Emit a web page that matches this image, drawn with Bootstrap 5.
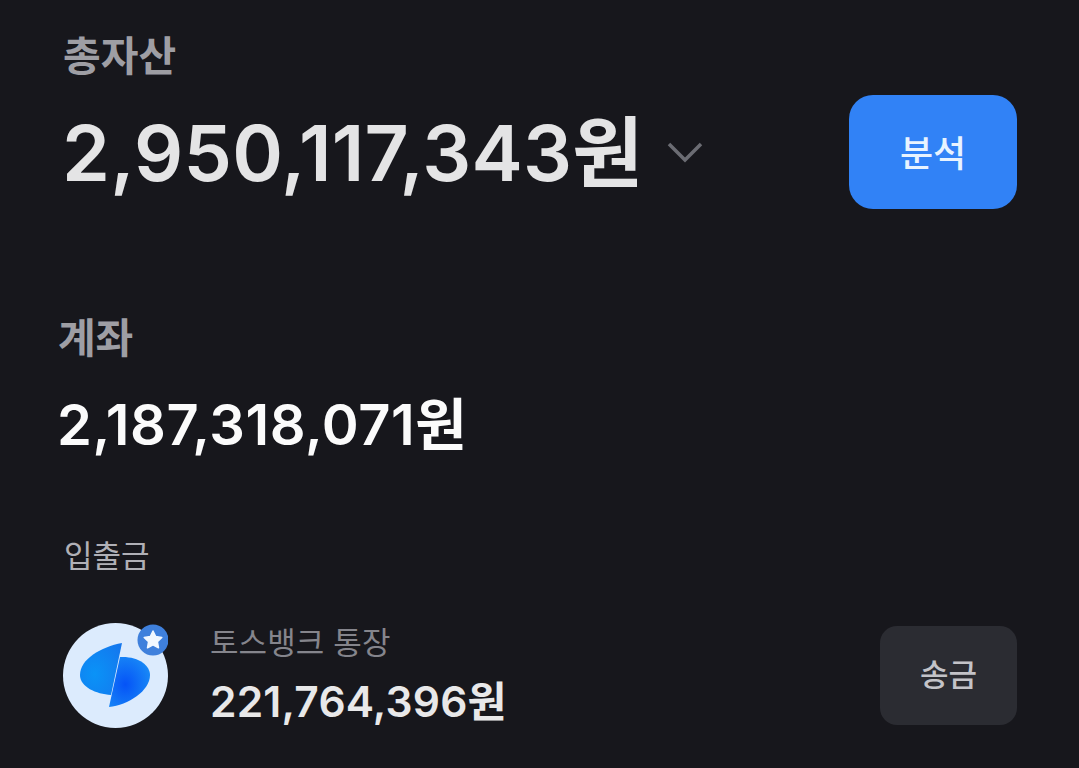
<!DOCTYPE html>
<html lang="ko">
<head>
<meta charset="utf-8">
<link href="https://cdn.jsdelivr.net/npm/bootstrap@5.3.0/dist/css/bootstrap.min.css" rel="stylesheet">
<style>
html,body{height:768px;overflow:hidden}
body{background:#17171c;font-family:Inter,"Noto Sans CJK KR",sans-serif;padding:31px 62px 0 63px}
.ttl-main{font-size:41px;line-height:50px;font-weight:600;color:#9e9ea4;letter-spacing:0}
.sum-row{height:114px;margin-top:14px}
.sum-main{font-size:77px;line-height:1;font-weight:600;color:#e4e4e5;letter-spacing:.2px;margin:2px 0 0 -1px}
.btn-analysis{width:168px;height:114px;background:#3182f6;border:0;border-radius:24px;color:#e8f3ff;font-size:36px;font-weight:500;padding:3px 0 0}
.acct-block{margin:104px 0 0 -5px}
.ttl-sub{font-size:41px;line-height:50px;font-weight:600;color:#9e9ea4;letter-spacing:-.3px}
.sum-sub{font-size:56px;line-height:70px;font-weight:600;color:#fbfbfb;letter-spacing:.55px;margin:27px 0 0 -1px}
.ttl-small{font-size:31px;line-height:40px;color:#b0b0b6;margin:76px 0 0 1px}
.item-row{height:106px;margin-top:46px}
.bank-logo{width:105px;height:105px;flex:none}
.item-text{margin-left:42px}
.bank-name{font-size:31px;line-height:38px;color:#85858c;letter-spacing:.1px}
.bank-sum{font-size:42.500px;line-height:50px;font-weight:600;color:#e8e8e9;letter-spacing:.2px;margin-top:15px}
.btn-send{width:137px;height:99px;background:#2b2c32;border:0;border-radius:17px;color:#c3c3c8;font-size:31px;font-weight:500;padding:0}
</style>
</head>
<body>
<div class="ttl-main">총자산</div>
<div class="sum-row d-flex align-items-center justify-content-between">
  <div class="d-flex align-items-center gap-4">
    <span class="sum-main">2,950,117,343원</span>
    <svg width="36" height="22" viewBox="0 0 36 22" fill="none" aria-hidden="true"><path d="M2 3 L18 19 L34 3" stroke="#6b6c73" stroke-width="3.5"/></svg>
  </div>
  <button class="btn btn-analysis" type="button">분석</button>
</div>
<div class="acct-block">
  <div class="ttl-sub">계좌</div>
  <div class="sum-sub">2,187,318,071원</div>
</div>
<div class="ttl-small">입출금</div>
<div class="item-row d-flex align-items-center">
  <svg class="bank-logo" viewBox="0 0 105 105" aria-hidden="true">
    <defs>
      <radialGradient id="lg1" cx=".35" cy=".6" r=".8"><stop offset="0" stop-color="#0a93f7"/><stop offset="1" stop-color="#1477ee"/></radialGradient>
      <radialGradient id="lg2" cx=".4" cy=".55" r=".7"><stop offset="0" stop-color="#0553f7"/><stop offset="1" stop-color="#1a8ef6"/></radialGradient>
    </defs>
    <circle cx="52.500" cy="52.500" r="52.500" fill="#dcebfd"/>
    <path d="M59 20 C38 24 17 36 17 52 C17 64 33 71 48 72 Z" fill="url(#lg1)"/>
    <path d="M57 34 C75 33 87 42 87 52 C87 68 65 82 46 84 Z" fill="url(#lg2)"/>
    <circle cx="90" cy="17" r="15.500" fill="#3f80dc"/>
    <path d="M90 8 L92.700 13.600 L98.800 14.400 L94.400 18.700 L95.500 24.800 L90 21.900 L84.500 24.800 L85.600 18.700 L81.200 14.400 L87.300 13.600 Z" fill="#f2f8ff" stroke="#f2f8ff" stroke-width="1.500" stroke-linejoin="round"/>
  </svg>
  <div class="flex-grow-1 item-text">
    <div class="bank-name">토스뱅크 통장</div>
    <div class="bank-sum">221,764,396원</div>
  </div>
  <button class="btn btn-send" type="button">송금</button>
</div>
</body>
</html>
